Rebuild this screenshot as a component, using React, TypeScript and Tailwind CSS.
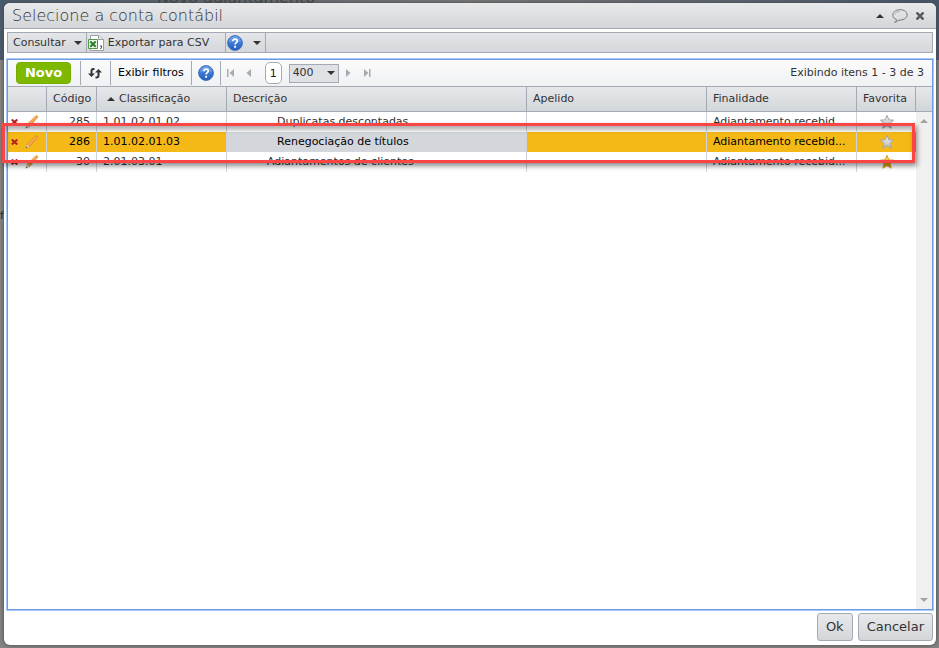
import { useState } from "react"
import type { ReactNode } from "react"

type Row = {
  code: string
  classification: string
  description: string
  indent: string
  nickname: string
  purpose: string
  favorite: boolean
}

const rows: Row[] = [
  { code: "285", classification: "1.01.02.01.02", description: "Duplicatas descontadas", indent: "pl-[50px]", nickname: "", purpose: "Adiantamento recebid...", favorite: false },
  { code: "286", classification: "1.01.02.01.03", description: "Renegociação de títulos", indent: "pl-[50px]", nickname: "", purpose: "Adiantamento recebid...", favorite: false },
  { code: "30", classification: "2.01.03.01", description: "Adiantamentos de clientes", indent: "pl-10", nickname: "", purpose: "Adiantamento recebid...", favorite: true },
]

function Caret({ up = false, className = "" }: { up?: boolean; className?: string }) {
  return (
    <svg viewBox="0 0 8 4" className={`h-1 w-2 shrink-0 ${className}`} fill="currentColor" aria-hidden="true">
      <path d={up ? "M0 4L4 0L8 4Z" : "M0 0H8L4 4Z"} />
    </svg>
  )
}

function HelpIcon() {
  return (
    <svg viewBox="0 0 16 16" className="size-4 shrink-0" aria-hidden="true">
      <defs>
        <linearGradient id="help" x1="0" y1="0" x2="0" y2="1">
          <stop offset="0" stopColor="#6ba0e8" />
          <stop offset="0.5" stopColor="#3a78d2" />
          <stop offset="1" stopColor="#2460c0" />
        </linearGradient>
      </defs>
      <circle cx="8" cy="8" r="7.4" fill="url(#help)" stroke="#3f6db8" />
      <path d="M2 7.5a6 6 0 0 1 12 0C10 6 6 6 2 7.5Z" fill="#8fb8ef" opacity="0.35" />
      <path d="M5.8 6.2C5.8 3.4 10.3 3.6 10.3 6.1C10.3 7.7 8.1 7.7 8.1 9.5" fill="none" stroke="#fff" strokeWidth="1.7" />
      <path d="M7.1 10.8h2v1.9h-2z" fill="#fff" />
    </svg>
  )
}

function CsvIcon() {
  return (
    <svg viewBox="0 0 16 16" className="size-4 shrink-0" aria-hidden="true">
      <path d="M2.5 0.5H10.5L15.5 4.5V15.5H2.5Z" fill="#fff" stroke="#9aa0a6" />
      <path d="M10.5 0.5V4.5H15.5" fill="#e4e7ea" stroke="#9aa0a6" />
      <path d="M0.5 4.5H9.5V13.5H0.5Z" fill="#e9f5e6" stroke="#4f9a4a" />
      <path d="M2.3 6.5L7.7 11.7M7.7 6.5L2.3 11.7" stroke="#2b7c2c" strokeWidth="1.9" />
      <path d="M12 11h1.5v1.5l-1 1.5" fill="none" stroke="#333" />
    </svg>
  )
}

function RefreshIcon() {
  return (
    <svg viewBox="0 0 14 12" className="h-3 w-[14px]" fill="none" stroke="#30343a" strokeWidth="2" aria-hidden="true">
      <path d="M6.5 2H5.5Q3.5 2 3.5 4V7" />
      <path d="M0 6.5H7L3.5 10Z" fill="#30343a" stroke="none" />
      <path d="M7.5 10.5H8.5Q10.5 10.5 10.5 8.5V5" />
      <path d="M7 5.5H14L10.5 2Z" fill="#30343a" stroke="none" />
    </svg>
  )
}

function DeleteIcon() {
  return (
    <svg viewBox="0 0 7 6" className="h-[6px] w-[7px]" stroke="#b91d1d" strokeWidth="2" aria-hidden="true">
      <path d="M0.7 0.5L6.3 5.5M6.3 0.5L0.7 5.5" />
    </svg>
  )
}

function PencilIcon() {
  return (
    <svg viewBox="0 0 14 14" className="size-[14px]" aria-hidden="true">
      <path d="M2.2 9.3L10.6 0.9Q12.2 0.2 13.1 1.8L4.8 11.6Z" fill="#f19a38" stroke="#d9822b" strokeWidth="0.5" />
      <path d="M3.4 9.9L11.3 1.9" stroke="#fbc37c" strokeWidth="0.9" />
      <path d="M2.2 9.3L4.8 11.6L0.8 13.2Z" fill="#ead3ae" stroke="#a98860" strokeWidth="0.4" />
      <path d="M1.5 11.6L2.5 12.5L0.7 13.3Z" fill="#555" />
    </svg>
  )
}

function StarIcon({ on }: { on: boolean }) {
  return (
    <svg viewBox="0 0 16 16" className="size-4" aria-hidden="true">
      <defs>
        <linearGradient id="starOn" x1="0" y1="0" x2="0" y2="1">
          <stop offset="0" stopColor="#ffdf68" />
          <stop offset="1" stopColor="#d99200" />
        </linearGradient>
        <linearGradient id="starOff" x1="0" y1="0" x2="0" y2="1">
          <stop offset="0" stopColor="#f2f2f2" />
          <stop offset="1" stopColor="#b9b9b9" />
        </linearGradient>
      </defs>
      <path
        d="M8 1.3L9.9 5.8L14.6 6.2L11 9.4L12.2 14.2L8 11.7L3.8 14.2L5 9.4L1.4 6.2L6.1 5.8Z"
        fill={on ? "url(#starOn)" : "url(#starOff)"}
        stroke={on ? "#d8a023" : "#a5a5a5"}
        strokeLinejoin="round"
      />
    </svg>
  )
}

function PagerButton({ label, d }: { label: string; d: string }) {
  return (
    <button type="button" aria-label={label} className="text-[#a5abb3]">
      <svg viewBox="0 0 8 8" className="size-2" fill="currentColor" aria-hidden="true">
        <path d={d} />
      </svg>
    </button>
  )
}

function Th({ children }: { children?: ReactNode }) {
  return <th className="h-[25px] border-r border-b border-[#a3aab4] pl-[6px] text-left font-normal whitespace-nowrap">{children}</th>
}

function AccountsTable() {
  const [selected, setSelected] = useState("286")

  return (
    <div className="flex min-h-0 flex-1">
      <div className="min-w-0 flex-1">
        <table className="w-full table-fixed border-separate border-spacing-0">
          <colgroup>
            <col className="w-[39px]" />
            <col className="w-[50px]" />
            <col className="w-[130px]" />
            <col className="w-[300px]" />
            <col className="w-[180px]" />
            <col className="w-[150px]" />
            <col />
          </colgroup>
          <thead className="bg-linear-to-b from-[#e6e8ea] to-[#d2d5d9]">
            <tr>
              <Th />
              <Th>Código</Th>
              <Th>
                <span className="flex items-center gap-1 pl-1">
                  <Caret up />
                  Classificação
                </span>
              </Th>
              <Th>Descrição</Th>
              <Th>Apelido</Th>
              <Th>Finalidade</Th>
              <Th>Favorita</Th>
            </tr>
          </thead>
          <tbody>
            {rows.map((row) => {
              const active = row.code === selected
              const cell = `h-5 border-r border-[#cfd2d8] p-0 ${active ? "bg-[#f5b917] text-black" : ""}`
              return (
                <tr key={row.code} onClick={() => setSelected(row.code)}>
                  <td className={cell}>
                    <div className="flex h-5 items-center gap-[7px] pl-[3px]">
                      <button type="button" aria-label={`Excluir ${row.code}`}>
                        <DeleteIcon />
                      </button>
                      <button type="button" aria-label={`Editar ${row.code}`}>
                        <PencilIcon />
                      </button>
                    </div>
                  </td>
                  <td className={cell}>
                    <div className="pr-[6px] text-right">{row.code}</div>
                  </td>
                  <td className={cell}>
                    <div className="px-[6px]">{row.classification}</div>
                  </td>
                  <td className={`h-5 border-r border-[#cfd2d8] p-0 ${active ? "bg-[#d3d6db] text-black" : ""}`}>
                    <div className={row.indent}>{row.description}</div>
                  </td>
                  <td className={cell}>{row.nickname}</td>
                  <td className={cell}>
                    <div className="pl-[6px] whitespace-nowrap">{row.purpose}</div>
                  </td>
                  <td className={`h-5 p-0 ${active ? "bg-[#f5b917]" : ""}`}>
                    <button type="button" aria-label="Favorita" className="mx-auto block">
                      <StarIcon on={row.favorite} />
                    </button>
                  </td>
                </tr>
              )
            })}
          </tbody>
        </table>
      </div>

      {/* Scrollbar */}
      <div className="flex w-4 flex-col">
        <div className="h-[25px] border-b border-[#a3aab4] bg-linear-to-b from-[#e6e8ea] to-[#d2d5d9]" />
        <div className="flex flex-1 flex-col items-center justify-between bg-[#f0f0f0] py-[7px] text-[#a3a3a3]">
          <Caret up />
          <Caret />
        </div>
      </div>
    </div>
  )
}

export default function App() {
  return (
    <div className="relative h-screen overflow-hidden bg-[#858483] py-[3px] pr-[3px] pl-1 font-['DejaVu_Sans',Verdana,sans-serif] text-[11px] leading-5 text-[#333]">
      {/* Dimmed page behind the dialog */}
      <div className="absolute inset-x-0 top-0 h-[60px] bg-linear-to-r from-[#4a5b6e] via-[#7b7b7b] to-[#46566b]" />
      <div className="absolute top-[-10px] left-[157px] text-base leading-4 text-[#444]">Novo adiantamento</div>
      <div className="absolute top-[206px] left-0 text-[#222]">f</div>

      <div role="dialog" aria-labelledby="dialog-title" className="relative flex h-full flex-col rounded-md bg-white shadow-[0_0_4px_#444]">
        <header className="flex h-[26px] shrink-0 items-center justify-between rounded-t-md border-b border-[#a3aab4] bg-linear-to-b from-[#e8e9eb] to-[#d3d6d9] pr-3 pl-2">
          <h1 id="dialog-title" className="text-base font-extralight">
            Selecione a conta contábil
          </h1>
          <div className="flex items-center gap-2 text-[#333]">
            <button type="button" aria-label="Recolher">
              <Caret up />
            </button>
            <button type="button" aria-label="Comentar">
              <svg viewBox="0 0 16 14" className="h-[14px] w-4" fill="none" stroke="#777" aria-hidden="true">
                <path d="M4.5 10.6C-1.5 8.5 0 0.7 8 0.7C17.5 0.7 17.5 11 8 11C6.5 11 5 13 2.5 13.2C4 12.5 4.8 11.8 4.5 10.6Z" />
                <path d="M3 5.5C3.5 3.5 5.5 2.6 7.5 2.5" stroke="#aaa" />
              </svg>
            </button>
            <button type="button" aria-label="Fechar">
              <svg viewBox="0 0 8 8" className="size-2" stroke="#5a5a5a" strokeWidth="2.5" aria-hidden="true">
                <path d="M0.5 0.5L7.5 7.5M7.5 0.5L0.5 7.5" />
              </svg>
            </button>
          </div>
        </header>

        {/* Actions */}
        <div className="mx-[3px] mt-[3px] flex h-[21px] shrink-0 items-stretch border border-[#a3aab4] bg-linear-to-b from-[#e4e6e8] to-[#d4d7db]">
          <button type="button" className="flex items-center gap-2 border-r border-[#a3aab4] pr-1 pl-[5px]">
            Consultar
            <Caret />
          </button>
          <button type="button" className="flex items-center gap-1 border-r border-[#a3aab4] pr-4 pl-px">
            <CsvIcon />
            Exportar para CSV
          </button>
          <button type="button" aria-label="Ajuda" className="flex items-center gap-[10px] border-r border-[#a3aab4] pr-1 pl-px">
            <HelpIcon />
            <Caret />
          </button>
        </div>

        <main className="mx-[3px] mt-[6px] flex min-h-0 flex-1 flex-col border border-[#6f9be0] shadow-[0_0_0_1px_#a9c8f7]">
          <div className="flex h-[27px] shrink-0 items-center justify-between border-b border-[#a3aab4] bg-linear-to-b from-[#fbfbfc] to-[#eff1f2] px-2">
            <div className="flex items-center">
              <button type="button" className="h-[22px] w-[55px] rounded-sm border border-[#78ac00] bg-[#7fb800] text-[13px] leading-5 font-bold text-white">
                Novo
              </button>
              <button type="button" aria-label="Atualizar" className="ml-[9px] flex h-6 items-center border-x border-[#a3aab4] pr-2 pl-[7px]">
                <RefreshIcon />
              </button>
              <button type="button" className="h-6 border-r border-[#a3aab4] px-[7px] text-black">
                Exibir filtros
              </button>
              <button type="button" aria-label="Ajuda" className="flex h-6 items-center border-r border-[#a3aab4] px-[6px]">
                <HelpIcon />
              </button>
              <div className="flex items-center gap-[10px] pl-[6px]">
                <PagerButton label="Primeira página" d="M0 0H1.5V8H0ZM7 0V8L2.5 4Z" />
                <PagerButton label="Página anterior" d="M6 0V8L1.5 4Z" />
                <input aria-label="Página" defaultValue="1" className="ml-[2px] h-[22px] w-[17px] rounded-[5px] border border-[#a3aab4] bg-white text-center text-[#222]" />
                <div className="relative -mx-[3px] flex items-center">
                  <select aria-label="Itens por página" className="h-[19px] w-[50px] appearance-none border border-[#a3aab4] bg-[#dfe1e4] pl-[3px] leading-4">
                    <option>400</option>
                    <option>200</option>
                    <option>100</option>
                  </select>
                  <Caret className="pointer-events-none absolute right-1" />
                </div>
                <PagerButton label="Próxima página" d="M0 0V8L4.5 4Z" />
                <PagerButton label="Última página" d="M0 0V8L4.5 4ZM5 0H6.5V8H5Z" />
              </div>
            </div>
            <span>Exibindo itens 1 - 3 de 3</span>
          </div>
          <AccountsTable />
        </main>

        <footer className="flex shrink-0 justify-end gap-[5px] pt-[3px] pr-[3px] pb-1">
          <button type="button" className="h-7 rounded-[3px] border border-[#a3aab4] bg-linear-to-b from-[#e8e9eb] to-[#d3d6d9] px-2 text-[13px]">
            Ok
          </button>
          <button type="button" className="h-7 rounded-[3px] border border-[#a3aab4] bg-linear-to-b from-[#e8e9eb] to-[#d3d6d9] px-2 text-[13px]">
            Cancelar
          </button>
        </footer>
      </div>

      {/* Callout around the selected account */}
      <div className="pointer-events-none absolute top-[123px] right-6 left-[2px] h-10 border-3 border-[#fb4444] shadow-[2px_3px_5px_rgba(0,0,0,0.45),inset_1px_4px_4px_rgba(0,0,0,0.3)]" />
    </div>
  )
}
